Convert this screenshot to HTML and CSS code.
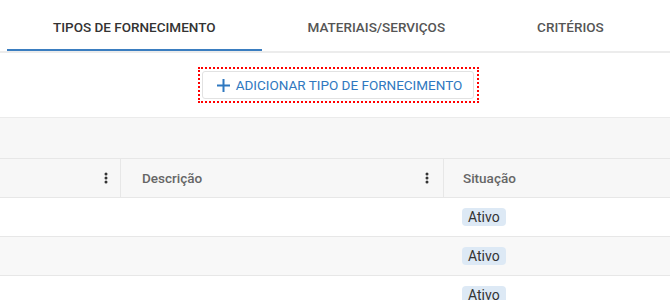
FILE: index.html
```html
<!doctype html>
<html>
<head>
<meta charset="utf-8">
<link rel="stylesheet" href="styles.css">
<title>Tipos de fornecimento</title>
</head>
<body>

<div class="tabs">
  <div class="tab tab-active">TIPOS DE FORNECIMENTO</div>
  <div class="tab">MATERIAIS/SERVIÇOS</div>
  <div class="tab">CRITÉRIOS</div>
</div>

<div class="toolbar">
  <div class="focus-ring">
    <button class="add-btn">
      <svg class="plus" width="13" height="13" viewBox="0 0 13 13"><path d="M6.5 0v13M0 6.5h13" stroke="#2f78c0" stroke-width="2"/></svg>
      <span>ADICIONAR TIPO DE FORNECIMENTO</span>
    </button>
  </div>
</div>

<div class="group-band"></div>

<div class="grid">
  <div class="row head">
    <div class="cell col-a"><svg class="kebab" width="4" height="12" viewBox="0 0 4 12"><circle cx="2" cy="2" r="1.5"/><circle cx="2" cy="6" r="1.5"/><circle cx="2" cy="10" r="1.5"/></svg></div>
    <div class="cell col-b"><span>Descrição</span><svg class="kebab" width="4" height="12" viewBox="0 0 4 12"><circle cx="2" cy="2" r="1.5"/><circle cx="2" cy="6" r="1.5"/><circle cx="2" cy="10" r="1.5"/></svg></div>
    <div class="cell col-c"><span>Situação</span></div>
  </div>
  <div class="row">
    <div class="cell col-a"></div>
    <div class="cell col-b"></div>
    <div class="cell col-c"><span class="badge">Ativo</span></div>
  </div>
  <div class="row alt">
    <div class="cell col-a"></div>
    <div class="cell col-b"></div>
    <div class="cell col-c"><span class="badge">Ativo</span></div>
  </div>
  <div class="row">
    <div class="cell col-a"></div>
    <div class="cell col-b"></div>
    <div class="cell col-c"><span class="badge">Ativo</span></div>
  </div>
</div>

</body>
</html>
```

FILE: styles.css
```css
body {
  margin: 0;
  font-family: Roboto, "Liberation Sans", sans-serif;
  background: #fff;
  overflow: hidden;
}

.tabs {
  display: flex;
  padding-left: 7px;
  border-bottom: 2px solid #ececec;
}

.tab {
  height: 51px;
  box-sizing: border-box;
  padding: 4px 46px 0;
  display: flex;
  align-items: center;
  font-size: 13.5px;
  font-weight: 500;
  color: #555;
  border-bottom: 2px solid transparent;
}

.tab-active {
  color: #333;
  border-bottom-color: #3a7dc0;
}

.toolbar {
  height: 64px;
  display: flex;
  align-items: center;
  justify-content: center;
  padding-left: 7px;
}

.focus-ring {
  border: 2px dotted #f00;
  padding: 2px 3px 2px 2px;
}

.add-btn {
  display: flex;
  align-items: center;
  gap: 6px;
  height: 28px;
  padding: 0 11px 0 14px;
  background: #fff;
  border: 1px solid #e2e2e2;
  border-radius: 3px;
  font-family: Roboto, "Liberation Sans", sans-serif;
  font-size: 13.5px;
  color: #2f78c0;
}

.plus {
  display: block;
}

.group-band {
  height: 40px;
  background: #f7f7f7;
  border-top: 1px solid #ebebeb;
}

.row {
  display: flex;
  height: 38px;
  border-bottom: 1px solid #e7e7e7;
  background: #fff;
}

.row.alt {
  background: #f8f8f8;
}

.row.head {
  background: #f7f7f7;
  border-top: 1px solid #e7e7e7;
  font-size: 13.5px;
  font-weight: 500;
  color: #666;
}

.cell {
  display: flex;
  align-items: center;
  box-sizing: border-box;
}

.col-a {
  width: 120px;
  justify-content: flex-end;
  padding-right: 12px;
}

.col-b {
  width: 323px;
  justify-content: space-between;
  padding: 0 14px 0 21px;
}

.col-c {
  flex: 1;
  padding-left: 19px;
}

.head .col-b,
.head .col-c {
  border-left: 1px solid #e7e7e7;
}

.kebab {
  fill: #333;
}

.badge {
  background: #dde9f5;
  color: #333;
  font-size: 14px;
  border-radius: 4px;
  padding: 1px 6px;
  line-height: 16px;
}
```
